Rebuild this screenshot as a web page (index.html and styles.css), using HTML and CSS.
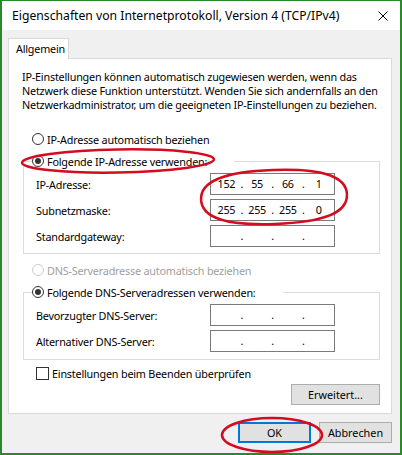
FILE: index.html
```html
<!DOCTYPE html>
<html lang="de">
<head>
  <meta charset="UTF-8">
  <title>Eigenschaften von Internetprotokoll, Version 4 (TCP/IPv4)</title>
  <link rel="stylesheet" href="styles.css">
</head>
<body>
  <div class="window">
    <div class="titlebar">
      <span class="title">Eigenschaften von Internetprotokoll, Version 4 (TCP/IPv4)</span>
      <svg class="close" width="10" height="10" viewBox="0 0 10 10">
        <path d="M0.5 0.5 L9.5 9.5 M9.5 0.5 L0.5 9.5" stroke="#000" stroke-width="1" fill="none"/>
      </svg>
    </div>

    <div class="client">
      <div class="tabs">
        <div class="tab">Allgemein</div>
      </div>

      <div class="panel">
        <p class="intro">IP-Einstellungen können automatisch zugewiesen werden, wenn das<br>Netzwerk diese Funktion unterstützt. Wenden Sie sich andernfalls an den<br>Netzwerkadministrator, um die geeigneten IP-Einstellungen zu beziehen.</p>

        <label class="radio"><span class="circle"></span>IP-Adresse automatisch beziehen</label>

        <fieldset class="group">
          <legend><label class="radio checked"><span class="circle"></span>Folgende IP-Adresse verwenden:</label></legend>
          <div class="row">
            <span class="label">IP-Adresse:</span>
            <div class="ip"><span>152</span><i>.</i><span>55</span><i>.</i><span>66</span><i>.</i><span>1</span></div>
          </div>
          <div class="row">
            <span class="label">Subnetzmaske:</span>
            <div class="ip"><span>255</span><i>.</i><span>255</span><i>.</i><span>255</span><i>.</i><span>0</span></div>
          </div>
          <div class="row">
            <span class="label">Standardgateway:</span>
            <div class="ip"><span></span><i>.</i><span></span><i>.</i><span></span><i>.</i><span></span></div>
          </div>
        </fieldset>

        <label class="radio disabled"><span class="circle"></span>DNS-Serveradresse automatisch beziehen</label>

        <fieldset class="group dns">
          <legend><label class="radio checked"><span class="circle"></span>Folgende DNS-Serveradressen verwenden:</label></legend>
          <div class="row">
            <span class="label">Bevorzugter DNS-Server:</span>
            <div class="ip"><span></span><i>.</i><span></span><i>.</i><span></span><i>.</i><span></span></div>
          </div>
          <div class="row">
            <span class="label">Alternativer DNS-Server:</span>
            <div class="ip"><span></span><i>.</i><span></span><i>.</i><span></span><i>.</i><span></span></div>
          </div>
        </fieldset>

        <label class="check"><span class="box"></span>Einstellungen beim Beenden überprüfen</label>

        <div class="advanced">
          <button class="btn">Erweitert...</button>
        </div>
      </div>

      <div class="actions">
        <button class="btn default">OK</button>
        <button class="btn">Abbrechen</button>
      </div>
    </div>

    <!-- red marker rings drawn over the dialog -->
    <svg class="marks" width="402" height="455" viewBox="0 0 402 455">
      <ellipse cx="118" cy="161" rx="96" ry="11.5" transform="rotate(-1 118 161)"/>
      <path d="M201,197 C201,178.6 224.4,170 274,170 C323.6,170 347,178.6 347,197 C347,215.4 323.6,224 274,224 C224.4,224 201,215.4 201,197 Z" transform="rotate(-2 274 197)"/>
      <ellipse cx="272" cy="435" rx="50" ry="17"/>
    </svg>
  </div>
</body>
</html>
```

FILE: styles.css
```css
:root {
  --frame: #2a8a2a;
  --face: #f0f0f0;
  --line: #d9d9d9;
  --edit: #7a7a7a;
  --text: #000;
  --muted: #a0a0a0;
  --mark: #d40c1f;
}

* {
  box-sizing: border-box;
}

body {
  margin: 0;
  width: 402px;
  height: 455px;
  overflow: hidden;
  font-family: "Noto Sans", sans-serif;
  font-size: 10.8px;
  letter-spacing: -0.2px;
  color: var(--text);
}

.window {
  position: relative;
  height: 455px;
  border: 2px solid var(--frame);
  border-top-width: 1px;
  background: var(--face);
  display: flex;
  flex-direction: column;
}

.titlebar {
  height: 29px;
  background: #fff;
  display: flex;
  align-items: center;
  justify-content: space-between;
  padding: 0 12px 0 10px;
  font-size: 12.2px;
  letter-spacing: 0;
}

.client {
  padding: 8px 8px 0 6px;
}

.tabs {
  display: flex;
}

.tab {
  position: relative;
  z-index: 1;
  width: 61px;
  height: 21px;
  margin-bottom: -1px;
  padding: 2px 0 0 7px;
  background: #fff;
  border: 1px solid var(--line);
  border-bottom: none;
}

.panel {
  background: #fff;
  border: 1px solid var(--line);
  padding: 11px 11px 8px 14px;
}

.intro {
  margin: 0 0 20px -1px;
  line-height: 14px;
  white-space: nowrap;
}

.radio,
.check {
  display: flex;
  align-items: center;
  height: 14px;
  margin-left: 9px;
}

.circle {
  width: 12px;
  height: 12px;
  margin-right: 3px;
  border: 1px solid #333;
  border-radius: 50%;
  display: flex;
  align-items: center;
  justify-content: center;
}

.radio.checked .circle::after {
  content: "";
  width: 6px;
  height: 6px;
  border-radius: 50%;
  background: #333;
}

.radio.disabled {
  color: var(--muted);
  margin-top: 9px;
}

.radio.disabled .circle {
  border-color: #cdcdcd;
}

.group {
  margin: 8px 0 0;
  padding: 5px 0 6px 12px;
  border: 1px solid #dcdcdc;
}

.group legend {
  margin-left: -4px;
  padding: 0 27px 0 0;
}

.group legend .radio {
  margin-left: 0;
}

.group.dns {
  padding-bottom: 7px;
}

.row {
  display: flex;
  align-items: center;
  height: 22px;
}

.row + .row {
  margin-top: 4px;
}

.label {
  width: 174px;
}

.ip {
  width: 125px;
  height: 22px;
  border: 1px solid var(--edit);
  display: flex;
  align-items: center;
  padding: 0 3px 1px 3px;
}

.ip span {
  flex: 1;
  text-align: center;
}

.ip i {
  font-style: normal;
  width: 6px;
  text-align: center;
}

.check {
  margin: 6px 0 0 13px;
}

.box {
  width: 13px;
  height: 13px;
  margin-right: 3px;
  border: 1px solid #333;
}

.advanced {
  display: flex;
  justify-content: flex-end;
  margin-top: 4px;
}

.btn {
  font: inherit;
  color: var(--text);
  height: 21px;
  width: 73px;
  padding: 0;
  background: #e1e1e1;
  border: 1px solid #adadad;
}

.advanced .btn {
  width: 89px;
}

.btn.default {
  border: 2px solid #0078d7;
}

.actions {
  display: flex;
  justify-content: flex-end;
  gap: 8px;
  margin-top: 8px;
}

.marks {
  position: absolute;
  left: -2px;
  top: -1px;
  pointer-events: none;
}

.marks ellipse,
.marks path {
  fill: none;
  stroke: var(--mark);
  stroke-width: 2.5;
}
```
